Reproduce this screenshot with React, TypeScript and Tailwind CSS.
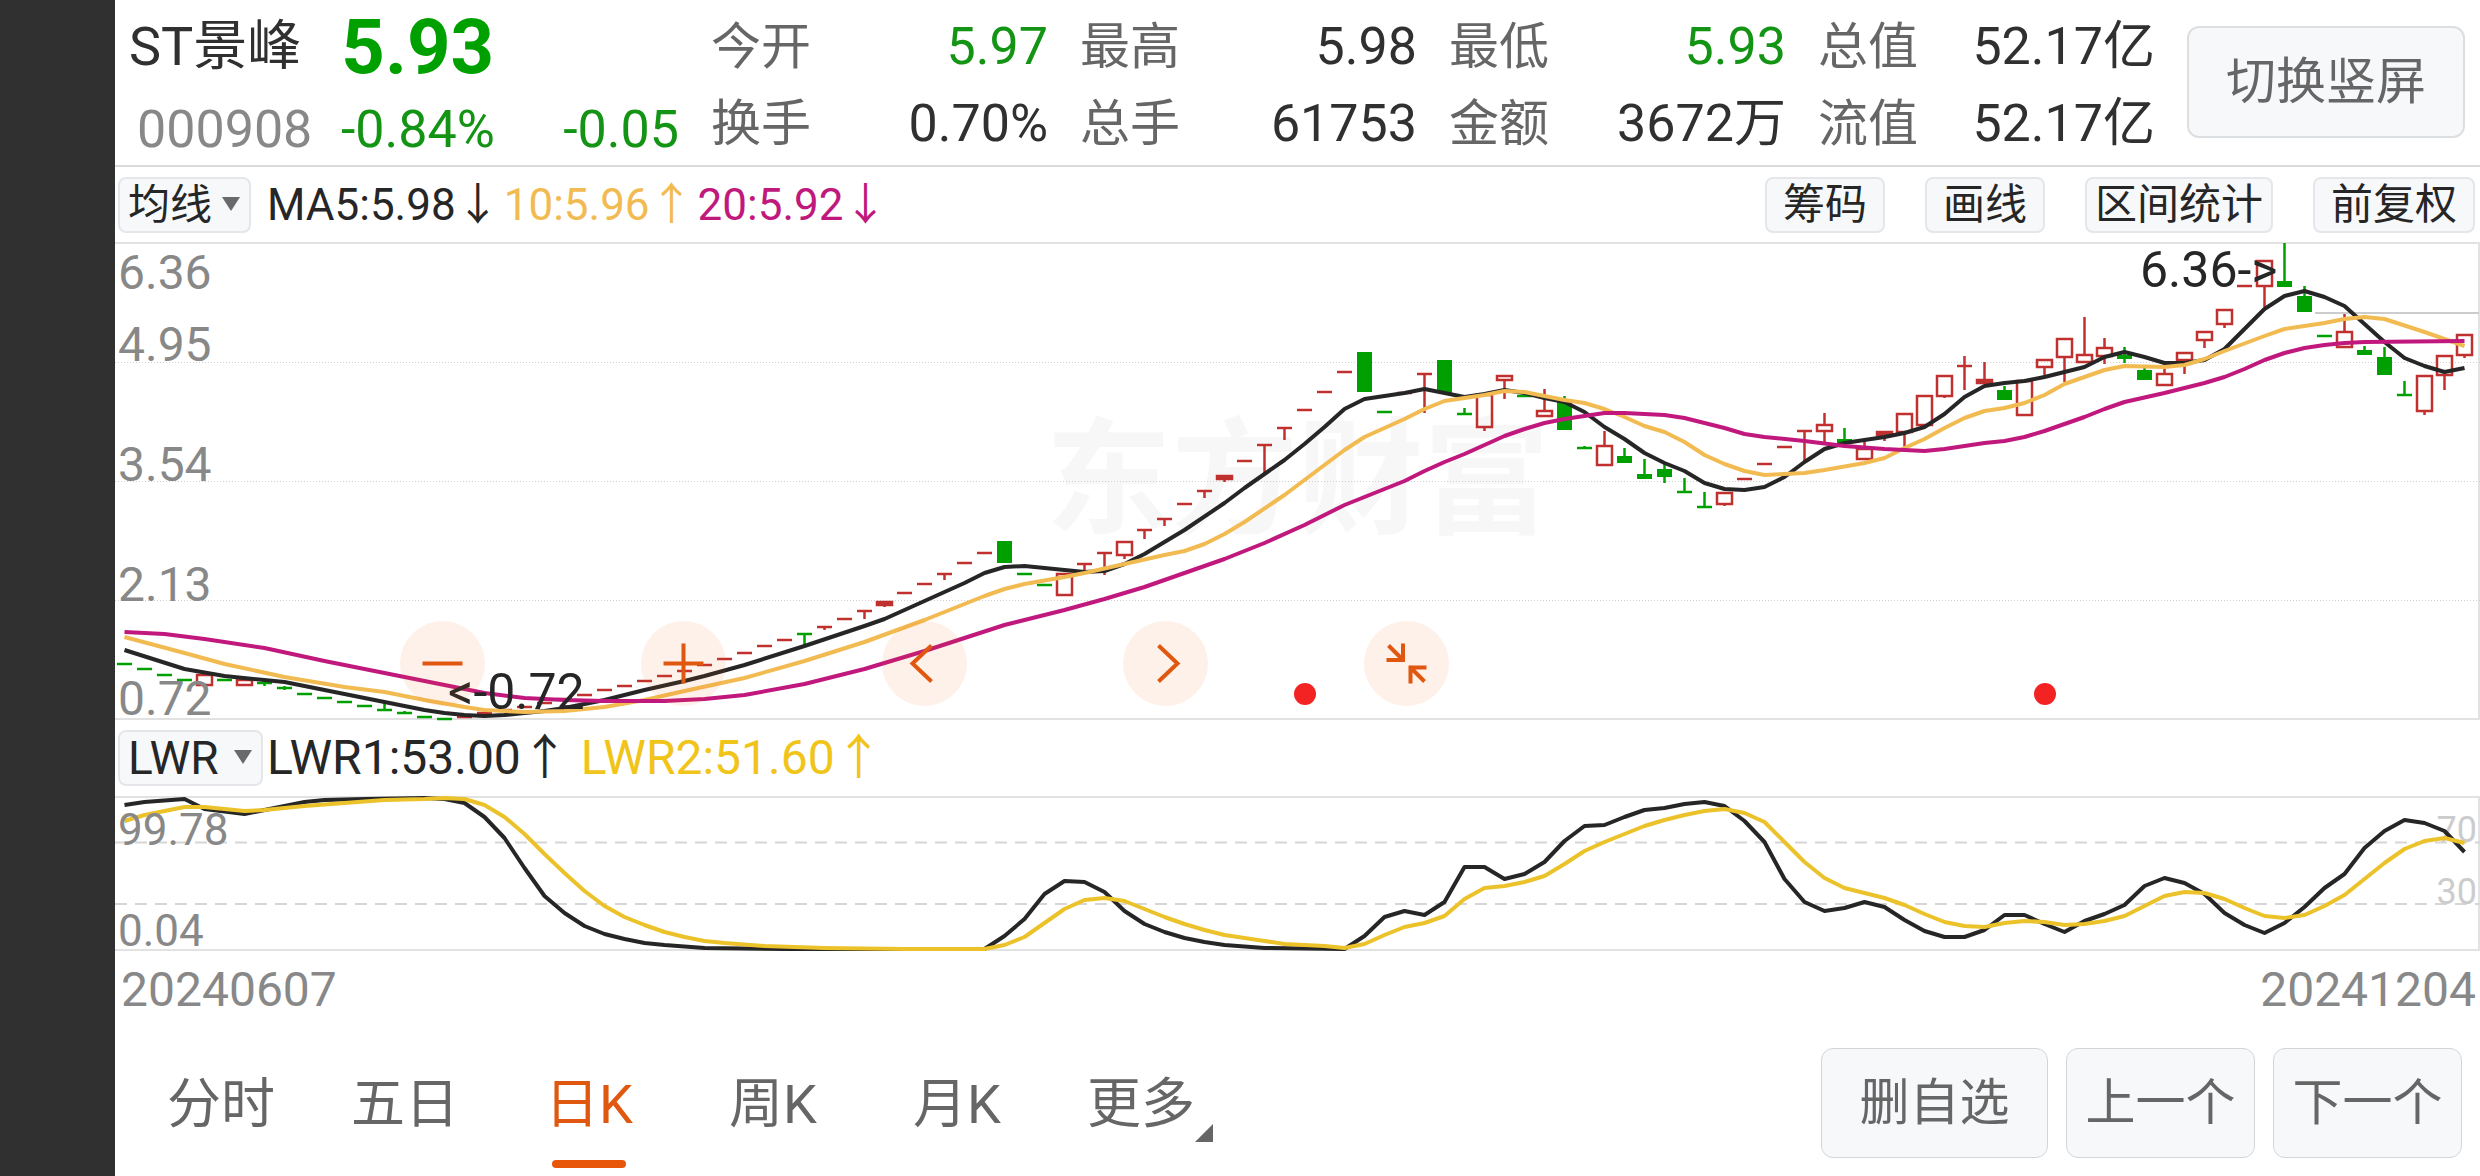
import { ReactNode } from 'react';

const RED = '#c0302e';
const GREEN = '#00a000';
const INK = '#262626';

// [kind, body top, body bottom, high, low]; r = hollow, R = solid red, g = green
type Candle = [string, number, number, number?, number?];

const candles: Candle[] = [
  ['g', 664, 664], ['g', 669, 669], ['g', 675, 675], ['g', 680, 680],
  ['r', 675, 685], ['g', 680, 680], ['r', 680, 685], ['g', 683, 683, 681, 686],
  ['g', 688, 688, 686, 690], ['g', 694, 694], ['g', 698, 698], ['g', 702, 702],
  ['g', 706, 706], ['g', 710, 710, 703, 710], ['g', 713, 713, 711, 713], ['g', 717, 717],
  ['g', 719, 719], ['r', 717, 717], ['r', 713, 713], ['r', 710, 710],
  ['r', 707, 707], ['r', 703, 703], ['r', 699, 699], ['r', 695, 695],
  ['r', 690, 690], ['r', 686, 686], ['r', 681, 681], ['r', 676, 676],
  ['r', 671, 671], ['r', 665, 665], ['r', 659, 659], ['r', 653, 653],
  ['r', 646, 646], ['r', 640, 640], ['g', 634, 634, 634, 646], ['r', 627, 627, 627, 630],
  ['r', 619, 619], ['r', 611, 611, 611, 619], ['R', 602, 605, 602, 607], ['r', 593, 593],
  ['r', 584, 584], ['r', 574, 574, 574, 580], ['r', 563, 563], ['r', 553, 553],
  ['g', 541, 563], ['g', 574, 574], ['g', 585, 585], ['r', 574, 595],
  ['r', 564, 564, 564, 572], ['r', 553, 553, 553, 575], ['r', 542, 555, 542, 559], ['r', 530, 530, 530, 539],
  ['r', 519, 519, 519, 526], ['r', 504, 504], ['r', 491, 491, 491, 498], ['R', 476, 479, 476, 482],
  ['r', 461, 461], ['r', 445, 445, 445, 474], ['r', 428, 428, 428, 440], ['r', 410, 410],
  ['r', 392, 392], ['r', 372, 372], ['g', 352, 392], ['g', 412, 412],
  ['r', 393, 393], ['r', 374, 374, 374, 413], ['g', 360, 393], ['g', 414, 414, 408, 414],
  ['r', 395, 427, 395, 431], ['r', 376, 380, 376, 399], ['g', 396, 396], ['r', 411, 416, 389, 416],
  ['g', 401, 430, 396, 430], ['g', 448, 448, 446, 448], ['r', 446, 465, 431, 465], ['g', 456, 463, 448, 463],
  ['g', 474, 479, 459, 479], ['g', 469, 477, 464, 483], ['g', 492, 492, 478, 492], ['g', 507, 507, 492, 507],
  ['r', 493, 504, 493, 506], ['r', 479, 479], ['r', 464, 464], ['r', 447, 447],
  ['r', 431, 431, 431, 463], ['r', 425, 431, 413, 443], ['g', 439, 443, 428, 443], ['r', 449, 459, 441, 459],
  ['R', 432, 435, 432, 441], ['r', 414, 432, 414, 448], ['r', 396, 425], ['r', 376, 396, 376, 398],
  ['r', 366, 366, 356, 390], ['R', 380, 383, 362, 383], ['g', 390, 400, 386, 400], ['r', 381, 415],
  ['r', 360, 367, 360, 376], ['r', 339, 357, 339, 382], ['r', 355, 362, 317, 362], ['r', 348, 356, 338, 364],
  ['g', 355, 359, 347, 363], ['g', 370, 380, 368, 380], ['r', 374, 385, 367, 385], ['r', 353, 360, 353, 374],
  ['r', 332, 340, 332, 348], ['r', 310, 324, 310, 328], ['r', 286, 286], ['r', 261, 286, 261, 307],
  ['g', 281, 287, 243, 287], ['g', 296, 312, 286, 312], ['g', 336, 336], ['r', 332, 347, 314, 347],
  ['g', 350, 355, 346, 355], ['g', 357, 375, 347, 375], ['g', 395, 395, 381, 395], ['r', 376, 411, 376, 415],
  ['r', 356, 375, 356, 390], ['r', 335, 355, 335, 358],
];

// "index:y" pairs, straight segments between them
const ma5 =
  '0:650 3:669 5:676 8:682 12:698 15:710 16:713 17:715 18:716 19:715 20:713 21:711 22:708 24:700 26:690 28:681 29:676 31:665 34:646 37:626 38:619 40:601 42:583 43:573 44:567 45:566 46:568 47:570 48:572 49:571 50:564 51:554 53:530 55:503 56:488 57:474 58:460 59:444 60:427 61:409 62:399 63:396 64:393 65:389 66:393 67:397 68:394 69:390 70:393 71:398 72:402 73:412 74:427 75:439 76:453 77:463 78:471 79:483 80:489 81:490 82:487 83:477 84:462 85:449 86:443 87:440 88:437 89:433 90:427 91:414 92:397 93:386 94:383 95:381 96:377 97:372 98:367 99:357 100:352 101:357 102:363 103:363 104:360 105:349 106:329 107:309 108:296 109:291 110:297 111:306 112:324 113:342 114:358 115:366 116:372 117:368';
const ma10 =
  '0:637 3:653 5:664 8:677 11:687 13:692 15:700 17:707 18:710 20:712 22:711 24:707 26:700 28:691 31:678 34:661 37:642 40:620 42:604 43:596 44:589 45:584 47:577 48:573 50:564 52:555 53:551 54:544 55:534 56:522 58:495 60:465 61:450 62:437 63:428 64:419 65:409 66:401 67:398 68:395 69:391 70:392 71:396 72:400 73:403 74:409 75:417 76:426 77:432 78:442 79:455 80:464 81:471 82:475 83:474 84:473 85:470 87:463 88:458 89:448 90:439 91:428 92:418 93:411 94:408 95:403 96:395 97:384 98:377 99:370 100:366 102:367 103:365 104:359 105:351 107:336 108:329 109:326 110:323 111:319 112:317 113:319 115:332 117:346';
const ma20 =
  '0:632 2:634 4:639 7:648 10:661 13:673 16:685 18:693 20:698 22:700 24:701 27:701 29:699 31:695 34:684 37:669 40:651 42:638 44:625 45:620 47:610 49:599 51:587 53:573 55:559 57:543 59:525 61:505 62:497 63:489 64:481 65:471 66:462 67:454 68:445 69:436 70:429 71:423 72:419 73:416 74:413 75:413 76:414 77:415 78:418 80:428 81:434 82:437 84:441 86:446 88:449 89:450 90:451 91:449 93:443 94:441 95:437 96:431 98:417 99:409 100:402 102:393 104:383 105:377 106:369 107:360 108:353 109:348 110:345 111:343 112:342 117:341';
const lwr1 =
  '0:805 1:802 3:799 4:809 6:814 8:806 9:802 10:800 12:799 15:798 16:799 17:803 18:817 19:838 20:868 21:896 22:913 23:926 24:934 25:939 26:943 27:945 29:948 33:949 43:949 44:936 45:919 46:894 47:881 48:882 49:892 50:911 51:924 52:932 53:938 54:942 55:945 57:948 61:949 62:936 63:917 64:911 65:915 66:902 67:867 68:867 69:879 70:874 71:862 72:841 73:826 74:825 75:817 76:810 77:808 78:804 79:802 80:806 81:821 82:842 83:879 84:902 85:911 86:908 87:902 88:907 89:920 90:931 91:937 92:937 93:930 94:915 95:915 96:924 97:932 98:921 99:914 100:905 101:886 102:878 103:883 104:894 105:913 106:925 107:933 108:923 109:907 110:888 111:874 112:848 113:831 114:820 115:823 116:831 117:852';
const lwr2 =
  '0:821 1:815 2:811 3:807 4:807 6:811 7:810 9:806 11:803 13:800 15:799 16:798 17:799 18:805 19:817 20:834 21:854 22:873 23:891 24:906 25:917 26:925 27:932 28:937 29:941 30:943 32:946 35:948 39:949 43:949 44:945 45:937 46:923 47:909 48:900 49:898 50:901 51:909 52:917 53:924 54:930 55:935 56:938 57:941 58:944 59:945 60:946 61:948 62:944 63:935 64:927 65:923 66:916 67:899 68:888 69:886 70:882 71:876 72:864 73:851 74:842 75:834 76:826 77:820 78:815 79:811 80:809 81:813 82:822 83:842 84:862 85:878 86:888 87:893 88:898 89:905 90:914 91:922 92:926 93:927 94:923 95:921 96:922 97:925 98:924 99:921 100:916 101:906 102:896 103:892 104:893 105:899 106:908 107:916 108:918 109:915 110:906 111:895 112:879 113:863 114:849 115:841 116:838 117:843';

const xAt = (i: number) => 9.5 + i * 20;

function Line({ data, color }: { data: string; color: string }) {
  const points = data
    .split(' ')
    .map((p) => {
      const [i, y] = p.split(':').map(Number);
      return `${xAt(i)},${y}`;
    })
    .join(' ');
  return <polyline points={points} fill="none" stroke={color} strokeWidth="4" strokeLinejoin="round" />;
}

function CandleShape({ candle, index }: { candle: Candle; index: number }) {
  const [kind, top, bottom, high = top, low = bottom] = candle;
  const x = xAt(index);
  const color = kind === 'g' ? GREEN : RED;
  const flat = top === bottom;
  return (
    <g stroke={color} strokeWidth="2.5">
      {high < top && <line x1={x} x2={x} y1={high} y2={top} />}
      {low > bottom && <line x1={x} x2={x} y1={bottom} y2={low} />}
      {flat ? (
        <line x1={x - 7.5} x2={x + 7.5} y1={top} y2={top} />
      ) : kind === 'g' ? (
        <rect x={x - 7.5} y={top} width="15" height={bottom - top} fill={color} stroke="none" />
      ) : (
        <rect x={x - 7.5} y={top} width="15" height={bottom - top} fill={kind === 'R' ? color : 'none'} />
      )}
    </g>
  );
}

const quotes = [
  { label: '今开', value: '5.97', down: true },
  { label: '最高', value: '5.98' },
  { label: '最低', value: '5.93', down: true },
  { label: '总值', value: '52.17亿' },
  { label: '换手', value: '0.70%' },
  { label: '总手', value: '61753' },
  { label: '金额', value: '3672万' },
  { label: '流值', value: '52.17亿' },
];

const tabs = ['分时', '五日', '日K', '周K', '月K', '更多'];

function Header() {
  return (
    <header className="flex items-start border-b-2 border-[#dadada]">
      <div className="flex w-[596px] shrink-0 flex-col pl-[14px]">
        <div className="flex h-[94px] items-center gap-10">
          <h1 className="text-[54px] leading-none text-[#303030]">ST景峰</h1>
          <span className="text-[76px] leading-none font-bold text-[#00a000]">5.93</span>
        </div>
        <div className="flex h-[71px] items-center text-[52px] leading-[60px] text-[#149414]">
          <span className="w-[212px] pl-2 text-[#888]">000908</span>
          <span className="flex-1">-0.84%</span>
          <span className="pr-8">-0.05</span>
        </div>
      </div>
      <dl className="grid flex-1 grid-cols-4 gap-x-8 pt-[8px]">
        {quotes.map((q) => (
          <div key={q.label} className="flex h-[77px] items-center justify-between">
            <dt className="text-[50px] leading-none text-[#666]">{q.label}</dt>
            <dd className={`text-[52px] leading-none ${q.down ? 'text-[#149414]' : 'text-[#303030]'}`}>{q.value}</dd>
          </div>
        ))}
      </dl>
      <button className="mt-[26px] mr-[15px] ml-8 h-28 w-[278px] shrink-0 rounded-xl border-2 border-[#dcdfe2] bg-[#f7f8fa] text-[50px] text-[#666]">
        切换竖屏
      </button>
    </header>
  );
}

function IndicatorSelect({ label, value, className }: { label: string; value: string; className: string }) {
  return (
    <div className={`relative h-14 rounded-lg border-2 border-[#e4e6ea] bg-[#f7f8fa] ${className}`}>
      <select aria-label={label} className="h-full w-full appearance-none bg-transparent pl-2 leading-none text-[#262626] outline-none">
        <option>{value}</option>
      </select>
      <svg viewBox="0 0 18 14" className="pointer-events-none absolute top-[18px] right-[9px] h-[14px] w-[18px]">
        <path d="M0 0h18L9 14z" fill="#6a6a6a" />
      </svg>
    </div>
  );
}

function ToolButton({ children, className = 'px-4' }: { children: ReactNode; className?: string }) {
  return (
    <button className={`h-14 rounded-lg border-2 border-[#e4e6ea] bg-[#f7f8fa] text-[42px] leading-none text-[#262626] ${className}`}>
      {children}
    </button>
  );
}

function RoundButton({ label, path }: { label: string; path: string }) {
  return (
    <button aria-label={label} className="size-[85px] rounded-full bg-[#f5601a]/9">
      <svg viewBox="-42.5 -42.5 85 85" className="size-full">
        <path d={path} fill="none" stroke="#e0570f" strokeWidth="4" />
      </svg>
    </button>
  );
}

function PriceChart() {
  return (
    <section className="relative">
      <div className="absolute inset-0 -z-10 flex items-center justify-center text-[126px] leading-none font-bold text-[#f7f7f7]">
        东方财富
      </div>
      <svg viewBox="0 242 2365 478" className="block w-full overflow-visible">
        <path d="M0 243H2365M0 719H2365M2364 243V719" stroke="#e2e2e2" strokeWidth="2" />
        <path d="M0 362.5H2365M0 481.5H2365M0 600.5H2365" stroke="#cfcfcf" strokeDasharray="1 2" />
        <path d="M2200 313H2364" stroke="#ccc" strokeWidth="2" />
        {candles.map((c, i) => (
          <CandleShape key={i} candle={c} index={i} />
        ))}
        <Line data={ma5} color={INK} />
        <Line data={ma10} color="#f2bb52" />
        <Line data={ma20} color="#c0187c" />
        <g fontSize="48" fill="#888">
          <text x="3" y="289">6.36</text>
          <text x="3" y="361">4.95</text>
          <text x="3" y="481">3.54</text>
          <text x="3" y="601">2.13</text>
          <text x="3" y="715">0.72</text>
        </g>
        <g fontSize="50" fill={INK}>
          <text x="2025" y="287">6.36-&gt;</text>
          <text x="333" y="709">&lt;-0.72</text>
        </g>
        <circle cx="1190" cy="694" r="11" fill="#f42323" />
        <circle cx="1930" cy="694" r="11" fill="#f42323" />
      </svg>
      <div className="absolute bottom-[14px] left-[285px] flex gap-[156px]">
        <RoundButton label="缩小" path="M-20 0H20" />
        <RoundButton label="放大" path="M-20 0H20M0 -20V20" />
        <RoundButton label="左移" path="M7 -18L-12 0L7 18" />
        <RoundButton label="右移" path="M-7 -18L12 0L-7 18" />
        <RoundButton label="收起" path="M-18 -18L-3 -3M-20 -3.5H-3.5V-20M18 18L3 3M20 4H4V20" />
      </div>
    </section>
  );
}

function LwrChart() {
  return (
    <svg viewBox="0 796 2365 156" className="block w-full overflow-visible">
      <path d="M0 797H2365M0 950H2365M2364 797V950" stroke="#e2e2e2" strokeWidth="2" />
      <path d="M0 842.5H2365M0 904H2365" stroke="#d6d6d6" strokeWidth="2" strokeDasharray="12 8" />
      <g fontSize="36" fill="#ccc" textAnchor="end">
        <text x="2362" y="842">70</text>
        <text x="2362" y="904">30</text>
      </g>
      <Line data={lwr1} color={INK} />
      <Line data={lwr2} color="#ecc22a" />
      <g fontSize="44" fill="#888">
        <text x="3" y="845">99.78</text>
        <text x="3" y="946">0.04</text>
      </g>
    </svg>
  );
}

function Footer() {
  return (
    <footer className="flex flex-1 items-center justify-between pt-2 pr-[18px] pl-[14px]">
      <nav className="flex">
        {tabs.map((tab) => {
          const active = tab === '日K';
          return (
            <a
              key={tab}
              href="#"
              className={`relative flex w-[184px] justify-center pt-10 pb-9 text-[54px] leading-[54px] ${active ? 'text-[#e0570f]' : 'text-[#666]'}`}
            >
              {tab}
              {active && <span className="absolute bottom-0 h-2 w-[74px] rounded-full bg-[#e8560a]" />}
              {tab === '更多' && (
                <svg viewBox="0 0 18 18" className="absolute right-5 bottom-[26px] size-[18px]">
                  <path d="M18 0V18H0z" fill="#666" />
                </svg>
              )}
            </a>
          );
        })}
      </nav>
      <div className="flex gap-[18px] text-[50px] text-[#666]">
        <button className="h-[110px] w-[227px] rounded-xl border border-[#d2d5d9] bg-[#f7f8fa]">删自选</button>
        <button className="h-[110px] w-[189px] rounded-xl border border-[#d2d5d9] bg-[#f7f8fa]">上一个</button>
        <button className="h-[110px] w-[189px] rounded-xl border border-[#d2d5d9] bg-[#f7f8fa]">下一个</button>
      </div>
    </footer>
  );
}

export default function App() {
  return (
    <div className="flex min-h-screen bg-white font-[Roboto,'Noto_Sans_CJK_SC',sans-serif]">
      <aside className="w-[115px] shrink-0 bg-[#303030]" />
      <main className="isolate flex min-w-0 flex-1 flex-col">
        <Header />
        <div className="flex h-[75px] items-center justify-between pr-[5px] pl-[3px]">
          <div className="flex items-center text-[44px] leading-none">
            <IndicatorSelect label="主图指标" value="均线" className="mr-4 w-[133px] text-[42px]" />
            <p className="flex gap-1">
              <span className="text-[#262626]">MA5:5.98↓</span>
              <span className="text-[#f2bb52]">10:5.96↑</span>
              <span className="text-[#c0187c]">20:5.92↓</span>
            </p>
          </div>
          <div className="flex gap-10">
            <ToolButton>筹码</ToolButton>
            <ToolButton>画线</ToolButton>
            <ToolButton className="px-2">区间统计</ToolButton>
            <ToolButton>前复权</ToolButton>
          </div>
        </div>
        <PriceChart />
        <div className="flex h-[76px] items-center pl-[3px] text-[48px] leading-none">
          <IndicatorSelect label="副图指标" value="LWR" className="mr-1 w-[145px] text-[46px]" />
          <p className="flex gap-3">
            <span className="text-[#262626]">LWR1:53.00↑</span>
            <span className="text-[#f0c419]">LWR2:51.60↑</span>
          </p>
        </div>
        <LwrChart />
        <div className="flex justify-between pt-[6px] pr-1 pl-[6px] text-[48px] leading-[64px] text-[#888]">
          <time>20240607</time>
          <time>20241204</time>
        </div>
        <Footer />
      </main>
    </div>
  );
}
